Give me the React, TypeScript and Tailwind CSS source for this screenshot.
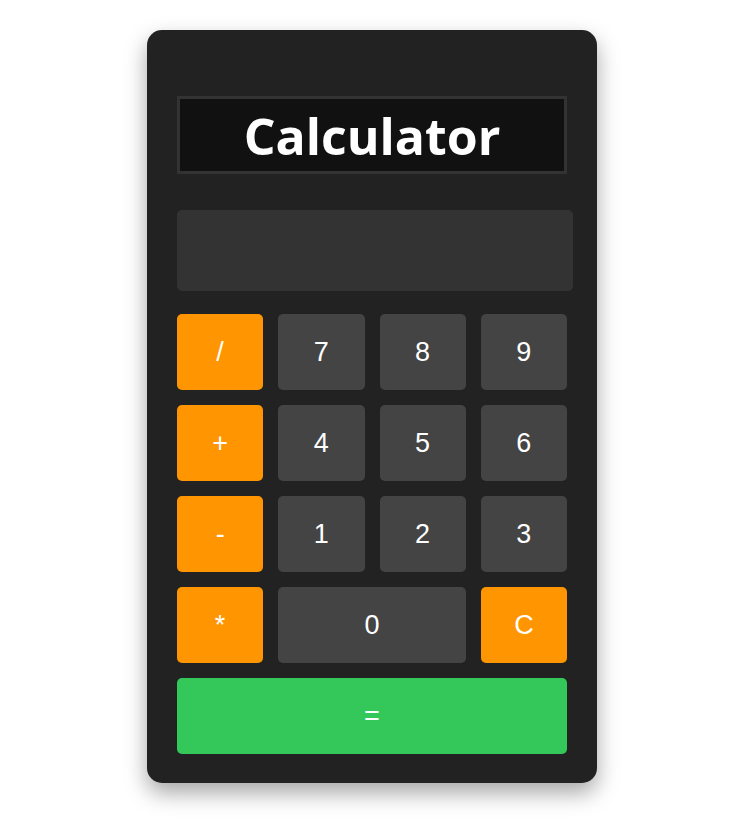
import React from "react";

type Key = { label: string; kind: "op" | "num" | "clear" | "eq"; span?: number };

const keys: Key[] = [
  { label: "/", kind: "op" },
  { label: "7", kind: "num" },
  { label: "8", kind: "num" },
  { label: "9", kind: "num" },
  { label: "+", kind: "op" },
  { label: "4", kind: "num" },
  { label: "5", kind: "num" },
  { label: "6", kind: "num" },
  { label: "-", kind: "op" },
  { label: "1", kind: "num" },
  { label: "2", kind: "num" },
  { label: "3", kind: "num" },
  { label: "*", kind: "op" },
  { label: "0", kind: "num", span: 2 },
  { label: "C", kind: "clear" },
  { label: "=", kind: "eq", span: 4 },
];

function keyClass(k: Key) {
  const base =
    "h-[76px] rounded-[5px] flex items-center justify-center text-white text-[27px] cursor-pointer";
  const color =
    k.kind === "num"
      ? "bg-[#444444]"
      : k.kind === "eq"
      ? "bg-[#34c85a]"
      : "bg-[#ff9500]";
  const span = k.span === 4 ? "col-span-4" : k.span === 2 ? "col-span-2" : "";
  return `${base} ${color} ${span}`;
}

export default function App() {
  const [value, setValue] = React.useState("");

  const press = (k: Key) => {
    if (k.kind === "clear") return setValue("");
    if (k.kind === "eq") {
      try {
        // eslint-disable-next-line no-new-func
        const r = Function(`"use strict";return (${value || "0"})`)();
        setValue(String(r));
      } catch {
        setValue("Error");
      }
      return;
    }
    setValue((v) => v + k.label);
  };

  return (
    <div
      className="min-h-screen bg-white pt-[30px]"
      style={{ fontFamily: '"Liberation Sans", Arial, sans-serif' }}
    >
      <div className="ml-[147px] w-[450px] h-[753px] rounded-[15px] bg-[#222222] px-[30px] pt-[66px] shadow-[0_10px_22px_rgba(0,0,0,0.35)]">
        <div className="h-[78px] w-[390px] border-[3px] border-[#333333] bg-[#111111] flex items-center justify-center">
          <h1
            className="text-white text-[50px] font-bold leading-none pt-[2px]"
            style={{ fontFamily: '"Open Sans", "Noto Sans", sans-serif' }}
          >
            Calculator
          </h1>
        </div>
        <div className="mt-[36px] h-[81px] w-[396px] rounded-[5px] bg-[#333333] flex items-center justify-end px-4 text-white text-[32px]">
          {value}
        </div>
        <div className="mt-[23px] w-[390px] grid grid-cols-4 gap-x-[15px] gap-y-[15px]">
          {keys.map((k) => (
            <button key={k.label} className={keyClass(k)} onClick={() => press(k)}>
              {k.label}
            </button>
          ))}
        </div>
      </div>
    </div>
  );
}
